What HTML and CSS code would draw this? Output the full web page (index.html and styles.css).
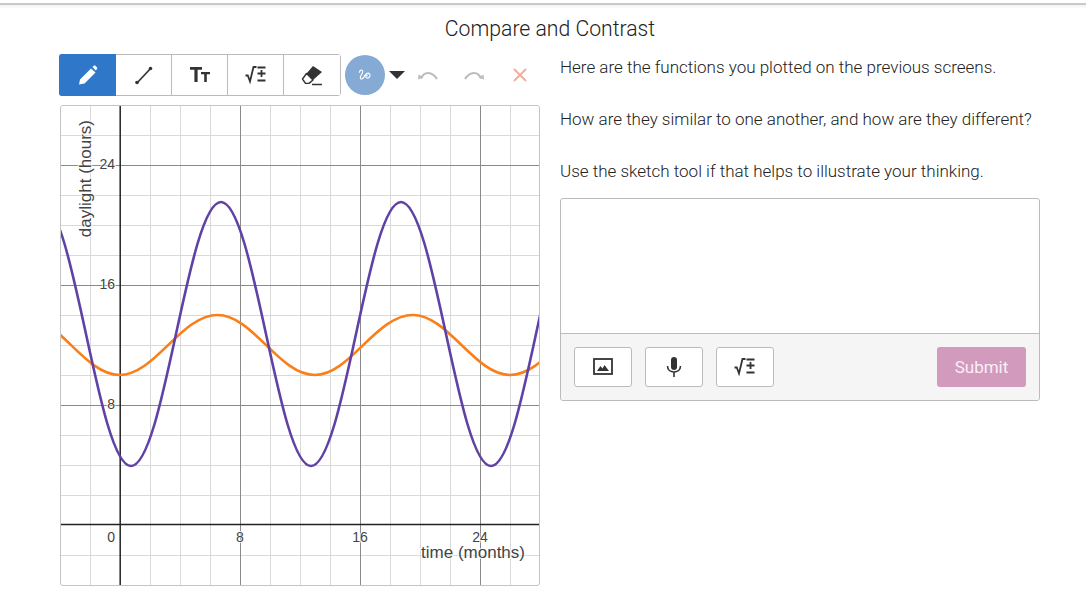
FILE: index.html
```html
<!DOCTYPE html>
<html lang="en">

<head>
    <meta charset="UTF-8">
    <title>Compare and Contrast</title>
    <link rel="stylesheet" href="styles.css">
</head>

<body>
    <div class="top-line"></div>
    <h1 class="title">Compare and Contrast</h1>

    <div class="screen">
        <div class="sketch">
            <div class="tools">
                <div class="tool-group">
                    <button class="tool active">
                        <svg width="24" height="24" viewBox="0 0 24 24"><path d="M3 21.500l1-5L15 5.500l4.500 4L8.500 20.500zM16.500 4l1.300-1.200c.6-.4 1.300-.4 1.800.1l1.300 1.300c.5.5.5 1.200.1 1.800L19.800 7.500z" fill="#fff"/></svg>
                    </button>
                    <button class="tool">
                        <svg width="24" height="24" viewBox="0 0 24 24"><path d="M5 20L19 5" stroke="#333" stroke-width="1.700"/><circle cx="5" cy="19.500" r="1.800" fill="#333"/><circle cx="18.500" cy="5.500" r="1.800" fill="#333"/></svg>
                    </button>
                    <button class="tool">
                        <svg width="24" height="24" viewBox="0 0 24 24"><path d="M2 4h12v2.800H9.600V19H6.400V6.800H2zM13 9h9v2.200h-3.200V19h-2.600v-7.800H13z" fill="#333"/></svg>
                    </button>
                    <button class="tool">
                        <svg width="24" height="24" viewBox="0 0 24 24"><path d="M1.500 12.500h2.300l2.200 6L9.500 4h3" fill="none" stroke="#333" stroke-width="1.800"/><path d="M13.500 4.500h8M17.500 7v7M13.500 10.500h8M13.500 17.500h8" stroke="#333" stroke-width="1.800"/></svg>
                    </button>
                    <button class="tool">
                        <svg width="24" height="24" viewBox="0 0 24 24"><path d="M13 3l9 6-9 8-6.500-6.500z" fill="#333"/><path d="M6.500 10.500L13 17l-4 3.400H5.500L2.500 16z" fill="#fff" stroke="#333" stroke-width="1.400" stroke-linejoin="round"/><path d="M12 21.500h10" stroke="#333" stroke-width="1.500"/></svg>
                    </button>
                </div>
                <div class="stroke-circle">
                    <svg width="18" height="18" viewBox="0 0 16 16"><path d="M3 6c0-3 3-3 3-1 0 2-3 4-2 6 .8 1.400 2.500 0 3.500-2 1-2 3-3.500 4.500-2 1.500 1.500-.5 4.500-2.500 3.500-1.500-.8-.5-2.500 1-2.500" fill="none" stroke="#fff" stroke-width="1"/></svg>
                </div>
                <div class="caret"></div>
                <svg class="action undo" width="20" height="9" viewBox="0 0 20 9"><path d="M3 7.500C6 0 14 0 19 8" fill="none" stroke="#bbb" stroke-width="2"/><path d="M0 8.500l.5-5 5 3z" fill="#bbb"/></svg>
                <svg class="action redo" width="20" height="9" viewBox="0 0 20 9"><path d="M1 8C6 0 14 0 17 7.500" fill="none" stroke="#bbb" stroke-width="2"/><path d="M20 8.500l-.5-5-5 3z" fill="#bbb"/></svg>
                <svg class="action clear" width="14" height="14" viewBox="0 0 14 14"><path d="M1 1l12 12M13 1L1 13" stroke="#f2ab9b" stroke-width="1.800"/></svg>
            </div>

            <div class="graph">
                <svg width="480" height="480" viewBox="0 0 480 480">
                    <path class="minor" d="M30.500 0V480M90.500 0V480M120.500 0V480M150.500 0V480M210.500 0V480M240.500 0V480M270.500 0V480M330.500 0V480M360.500 0V480M390.500 0V480M450.500 0V480M0 .5H480M0 30.500H480M0 90.500H480M0 120.500H480M0 150.500H480M0 210.500H480M0 240.500H480M0 270.500H480M0 330.500H480M0 360.500H480M0 390.500H480M0 450.500H480"/>
                    <path class="major" d="M180.500 0V480M300.500 0V480M420.500 0V480M0 60.500H480M0 180.500H480M0 300.500H480"/>
                    <path class="axis" d="M60.200 0V480M0 419.500H480"/>
                    <text class="tick" x="55" y="64" text-anchor="end">24</text>
                    <text class="tick" x="55" y="184" text-anchor="end">16</text>
                    <text class="tick" x="55" y="304" text-anchor="end">8</text>
                    <text class="tick" x="55" y="437" text-anchor="end">0</text>
                    <text class="tick" x="180" y="437" text-anchor="middle">8</text>
                    <text class="tick" x="300" y="437" text-anchor="middle">16</text>
                    <text class="tick" x="420" y="437" text-anchor="middle">24</text>
                    <text class="axis-label" x="465" y="453" text-anchor="end">time (months)</text>
                    <text class="axis-label" transform="translate(31 15) rotate(-90)" text-anchor="end">daylight (hours)</text>
                    <path class="curve orange" d="M-38 210C-2 210 24 270 59.500 270C95 270 121 210 157.500 210C193 210 219 270 255 270C290 270 316 210 353 210C388 210 415 270 450 270C486 270 512 210 548 210"/>
                    <path class="curve purple" d="M-19 97C14 97 38 361 71 361C104 361 128 97 161 97C194 97 218 361 251 361C284 361 308 97 341 97C374 97 398 361 431 361C464 361 488 97 521 97"/>
                </svg>
            </div>
        </div>

        <div class="response">
            <p>Here are the functions you plotted on the previous screens.</p>
            <p>How are they similar to one another, and how are they different?</p>
            <p>Use the sketch tool if that helps to illustrate your thinking.</p>

            <div class="answer">
                <div class="answer-text"></div>
                <div class="answer-footer">
                    <button class="attach">
                        <svg width="20" height="20" viewBox="0 0 20 20"><rect x="1" y="2" width="18" height="15" fill="none" stroke="#333" stroke-width="1.800"/><path d="M4 14l3.500-5 2 2.500 2-3.500 4.500 6z" fill="#333"/></svg>
                    </button>
                    <button class="attach">
                        <svg width="20" height="22" viewBox="0 0 20 22"><rect x="7" y="1" width="6" height="13" rx="3" fill="#333"/><path d="M3.500 10c0 4 3 6 6.500 6s6.500-2 6.500-6M10 16v5" fill="none" stroke="#333" stroke-width="1.600"/></svg>
                    </button>
                    <button class="attach">
                        <svg width="24" height="24" viewBox="0 0 24 24"><path d="M1.500 12.500h2.300l2.200 6L9.500 4h3" fill="none" stroke="#333" stroke-width="1.800"/><path d="M13.500 4.500h8M17.500 7v7M13.500 10.500h8M13.500 17.500h8" stroke="#333" stroke-width="1.800"/></svg>
                    </button>
                    <button class="submit">Submit</button>
                </div>
            </div>
        </div>
    </div>
</body>

</html>
```
FILE: styles.css
```css
* {
    margin: 0;
    padding: 0;
    box-sizing: border-box;
}

body {
    font-family: 'Roboto', sans-serif;
    font-weight: 300;
    color: #222;
    background: #fff;
    height: 589px;
    overflow: hidden;
}

button {
    font-family: inherit;
    background: #fff;
    display: flex;
    align-items: center;
    justify-content: center;
}

.top-line {
    height: 6px;
    margin-top: 3px;
    background: linear-gradient(#c9c9c9 0, #c9c9c9 2px, #f2f2f2 2px, #fff 100%);
}

.title {
    font-size: 21.200px;
    font-weight: 300;
    line-height: 24px;
    text-align: center;
    width: 1100px;
    margin-top: 8px;
}

.screen {
    display: flex;
    gap: 20px;
    padding-left: 59px;
    margin-top: 13px;
}

.tools {
    display: flex;
    align-items: center;
    height: 42px;
    width: 481px;
}

.tool-group {
    display: flex;
    height: 42px;
    border: 1px solid #bbb;
    border-radius: 3px;
}

.tool {
    width: 56px;
    height: 40px;
    border: 0;
    border-right: 1px solid #bbb;
}

.tool:last-child {
    border-right: 0;
}

.tool.active {
    width: 57px;
    height: 42px;
    margin: -1px 0 -1px -1px;
    background: #2f77c8;
    border-right: 0;
    border-radius: 3px 0 0 3px;
}

.stroke-circle {
    width: 40px;
    height: 40px;
    margin-left: 4px;
    border-radius: 50%;
    background: #85aad4;
    display: flex;
    align-items: center;
    justify-content: center;
}

.caret {
    width: 0;
    height: 0;
    margin-left: 4px;
    border-left: 8px solid transparent;
    border-right: 8px solid transparent;
    border-top: 8px solid #333;
}

.undo {
    margin-left: 13px;
}

.redo {
    margin-left: 26px;
}

.clear {
    margin-left: 29px;
}

.graph {
    width: 480px;
    height: 481px;
    margin-top: 9px;
    margin-left: 1px;
    border: 1px solid #c4c4c4;
    border-radius: 3px;
    overflow: hidden;
}

.graph svg {
    display: block;
    margin-left: -1px;
    margin-top: -1px;
}

.minor,
.major,
.axis,
.curve {
    fill: none;
}

.minor {
    stroke: #d9d9d9;
}

.major {
    stroke: #8a8a8a;
}

.axis {
    stroke: #222;
    stroke-width: 1.500;
}

.curve {
    stroke-width: 2.600;
}

.orange {
    stroke: #fa7e19;
}

.purple {
    stroke: #6042a6;
}

.tick,
.axis-label {
    font-family: 'Liberation Sans', sans-serif;
    font-weight: 400;
    fill: #444;
    stroke: rgba(255, 255, 255, 0.8);
    stroke-width: 2px;
    paint-order: stroke;
}

.tick {
    font-size: 14px;
}

.axis-label {
    font-size: 17px;
}

.response {
    width: 480px;
    padding-top: 2px;
    font-size: 17px;
    line-height: 22px;
}

.response p {
    margin-bottom: 30px;
}

.answer {
    margin-top: -14px;
    border: 1px solid #bbb;
    border-radius: 3px;
    height: 203px;
    display: flex;
    flex-direction: column;
}

.answer-text {
    height: 135px;
    border-bottom: 1px solid #bbb;
}

.answer-footer {
    flex: 1;
    display: flex;
    gap: 13px;
    padding: 13px;
    background: #f5f5f5;
    border-radius: 0 0 3px 3px;
}

.attach {
    width: 58px;
    height: 40px;
    border: 1px solid #bbb;
    border-radius: 3px;
}

.submit {
    width: 89px;
    height: 40px;
    margin-left: auto;
    border: 0;
    border-radius: 3px;
    background: #d29bbd;
    color: #fbeef6;
    font-size: 17px;
    font-weight: 400;
}
```
